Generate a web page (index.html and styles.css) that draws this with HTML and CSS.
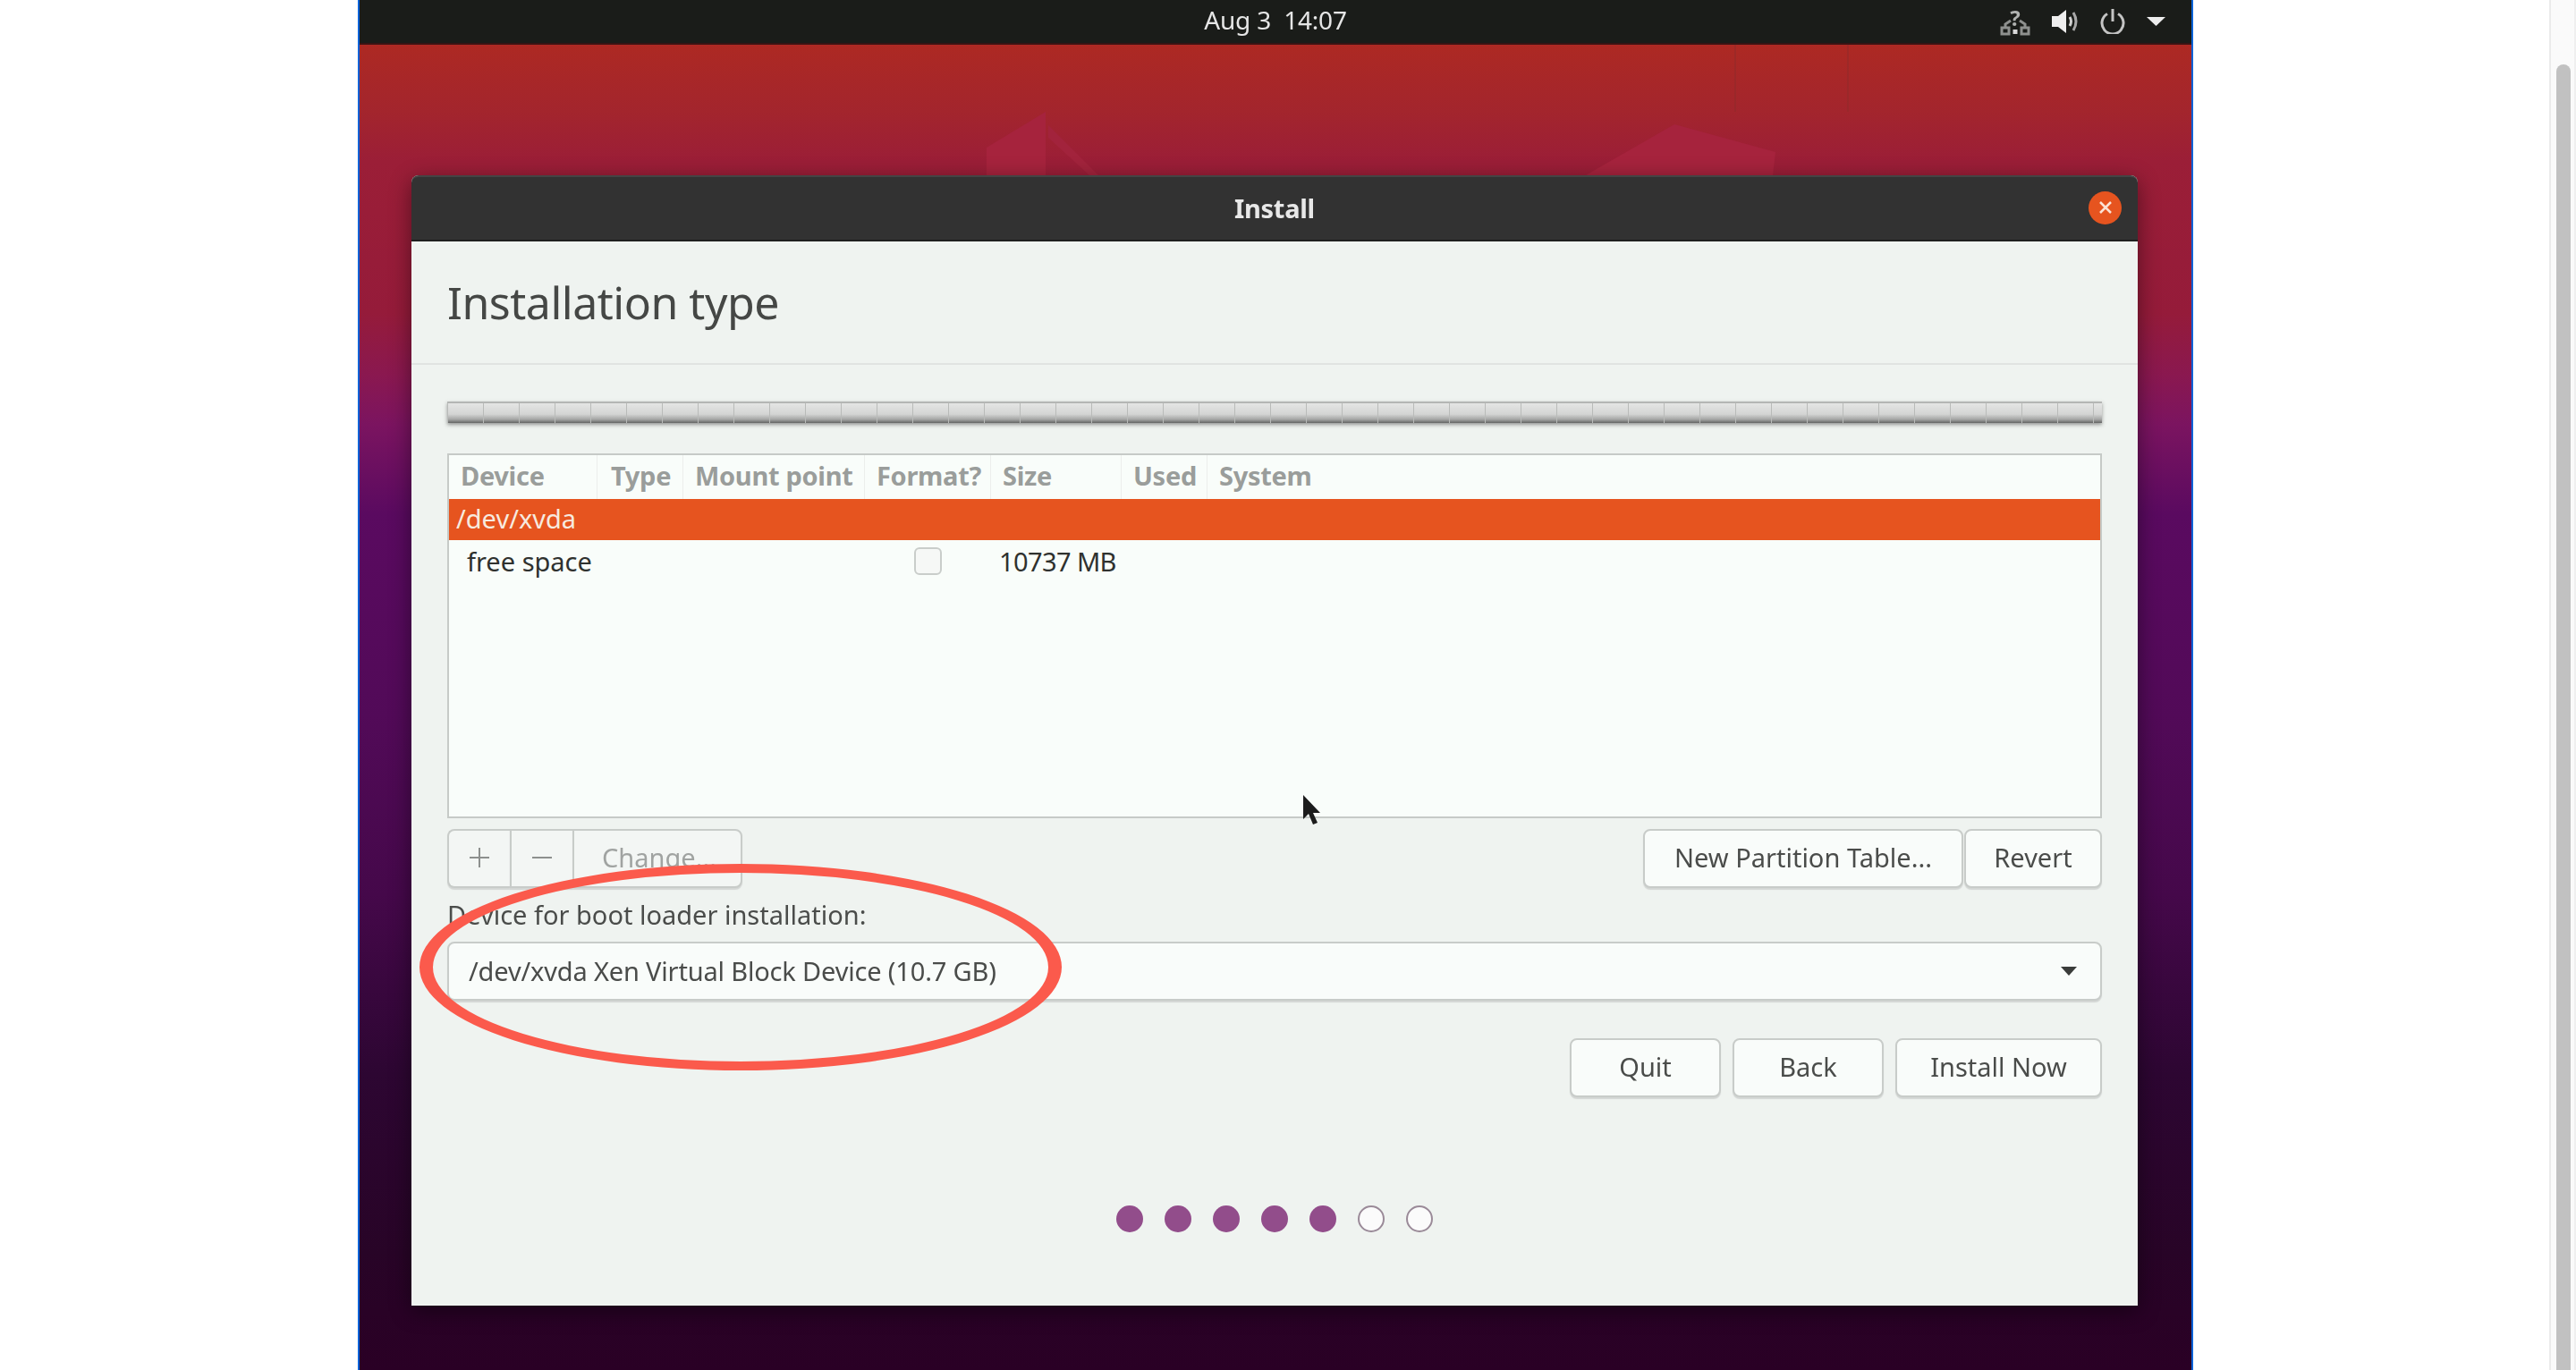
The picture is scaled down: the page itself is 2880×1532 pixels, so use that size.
FILE: index.html
```html
<!DOCTYPE html>
<html lang="en">
<head>
    <meta charset="UTF-8">
    <title>Install</title>
    <link rel="stylesheet" href="styles.css">
</head>
<body>
    <div class="gutter"></div>

    <div class="screen">
        <div class="topbar">
            <div></div>
            <div class="clock">Aug 3  14:07</div>
            <div class="tray">
                <svg class="tray-net" width="34" height="32" viewBox="0 0 34 32">
                    <g fill="none" stroke="#8e908e" stroke-width="3">
                        <rect x="2" y="23" width="8" height="7"/>
                        <rect x="24" y="23" width="8" height="7"/>
                        <path d="M6 23v-4l6-4M28 23v-4l-6-4"/>
                    </g>
                    <rect x="14.500" y="25" width="5" height="5" fill="#d8d8d8"/>
                    <text x="17" y="21" text-anchor="middle" class="tray-q">?</text>
                </svg>
                <svg width="30" height="26" viewBox="0 0 30 26">
                    <path d="M0 7h7l9-7v26l-9-7H0z" fill="#eeeeee"/>
                    <path d="M20 8q3 5 0 10" fill="none" stroke="#d0d0d0" stroke-width="3"/>
                    <path d="M24 3q6 10 0 20" fill="none" stroke="#a8a8a8" stroke-width="3"/>
                </svg>
                <svg width="28" height="28" viewBox="0 0 28 28">
                    <path d="M8 5.500a12 12 0 1 0 12 0" fill="none" stroke="#c4c4c4" stroke-width="3"/>
                    <path d="M14 0v14" stroke="#c4c4c4" stroke-width="3"/>
                </svg>
                <svg width="21" height="10" viewBox="0 0 21 10">
                    <path d="M0 0h21L10.500 10z" fill="#ededed"/>
                </svg>
            </div>
        </div>

        <div class="desktop">
            <svg class="wallpaper" width="2048" height="146" viewBox="0 0 2048 146">
                <path d="M767 75V146H701V115z" fill="#a6233d"/>
                <path d="M770 90L826 146H816L770 104z" fill="#a2233c"/>
                <path d="M1470 89L1583 120L1580 146H1371z" fill="#a6233d"/>
                <path d="M1538 0V75M1664 0V75" stroke="#8f2a2a" stroke-width="1"/>
            </svg>

            <div class="window">
                <div class="titlebar">
                    <div></div>
                    <div class="title">Install</div>
                    <div class="close">
                        <svg width="14" height="14" viewBox="0 0 14 14">
                            <path d="M1 1l12 12M13 1L1 13" stroke="#fbe3d6" stroke-width="2.500"/>
                        </svg>
                    </div>
                </div>

                <div class="page-head">
                    <h1>Installation type</h1>
                </div>

                <div class="content">
                    <div class="part-bar"></div>

                    <div class="table">
                        <div class="cols table-head">
                            <div>Device</div>
                            <div class="type-col">Type</div>
                            <div>Mount point</div>
                            <div>Format?</div>
                            <div>Size</div>
                            <div>Used</div>
                            <div class="last-col">System</div>
                        </div>
                        <div class="row-selected">/dev/xvda</div>
                        <div class="cols row-free">
                            <div class="free-name">free space</div>
                            <div></div>
                            <div></div>
                            <div class="check-cell"><span class="checkbox"></span></div>
                            <div class="free-size">10737 MB</div>
                        </div>
                    </div>

                    <div class="toolbar">
                        <div class="linked">
                            <button class="btn-off btn-icon">
                                <svg width="22" height="22" viewBox="0 0 22 22"><path d="M11 0v22M0 11h22" stroke="#8d908e" stroke-width="2"/></svg>
                            </button>
                            <button class="btn-off btn-icon">
                                <svg width="22" height="22" viewBox="0 0 22 22"><path d="M0 11h22" stroke="#8d908e" stroke-width="2"/></svg>
                            </button>
                            <button class="btn-off btn-change">Change...</button>
                        </div>
                        <div class="toolbar-right">
                            <button class="btn-table">New Partition Table...</button>
                            <button class="btn-revert">Revert</button>
                        </div>
                    </div>

                    <div class="boot-label">Device for boot loader installation:</div>
                    <div class="combo">
                        <span class="combo-text">/dev/xvda Xen Virtual Block Device (10.7 GB)</span>
                        <span class="combo-arrow"></span>
                    </div>

                    <div class="actions">
                        <button class="btn-action">Quit</button>
                        <button class="btn-action">Back</button>
                        <button class="btn-install">Install Now</button>
                    </div>

                    <div class="dots">
                        <span class="dot dot-on"></span>
                        <span class="dot dot-on"></span>
                        <span class="dot dot-on"></span>
                        <span class="dot dot-on"></span>
                        <span class="dot dot-on"></span>
                        <span class="dot"></span>
                        <span class="dot"></span>
                    </div>
                </div>

                <svg class="circle-mark" width="718" height="231" viewBox="0 0 718 231">
                    <path fill="#fb5a4c" fill-rule="evenodd" d="M0 115.500a359 115.500 0 1 0 718 0a359 115.500 0 1 0-718 0zM15 115.500a344 105.500 0 1 1 688 0a344 105.500 0 1 1-688 0z"/>
                </svg>
            </div>

            <svg class="cursor" width="21" height="35" viewBox="0 0 21 35">
                <path d="M1 1v27l6-6 5 12 5-2-5-11h8z" fill="#1c1c1c"/>
            </svg>
        </div>
    </div>

    <div class="blank"></div>

    <div class="scrollbar">
        <div class="thumb"></div>
    </div>
</body>
</html>
```

FILE: styles.css
```css
* {
    box-sizing: border-box;
}
body {
    margin: 0;
    height: 1532px;
    overflow: hidden;
    display: flex;
    background-color: #fff;
    font-family: "Noto Sans", sans-serif;
    font-size: 29px;
    color: #4a4c4a;
}
.gutter {
    width: 400px;
}
.blank {
    flex: 1;
}
.screen {
    width: 2052px;
    border-left: 2px solid #0a63d8;
    border-right: 2px solid #0a63d8;
    display: flex;
    flex-direction: column;
}

/* top panel */
.topbar {
    height: 50px;
    display: grid;
    grid-template-columns: 1fr auto 1fr;
    align-items: center;
    background-color: #1a1c19;
    border-bottom: 2px solid #3a1414;
    filter: blur(0.5px);
}
.clock {
    font-size: 28px;
    letter-spacing: -0.2px;
    white-space: pre;
    color: #e6e6e6;
    padding-bottom: 4px;
}
.tray {
    justify-self: end;
    margin-right: 29px;
    display: flex;
    align-items: center;
    gap: 24px;
}
.tray-net {
    overflow: visible;
}
.tray-q {
    font-size: 24px;
    font-weight: 700;
    fill: #b0b2b0;
}

/* wallpaper */
.desktop {
    flex: 1;
    position: relative;
    padding: 146px 0 0 58px;
    overflow: hidden;
    background: linear-gradient(180deg,
        #ad2923 0,
        #a3252d 75px,
        #9b1e37 130px,
        #951b3a 300px,
        #8a1850 370px,
        #7b1460 425px,
        #5a0a60 525px,
        #520a58 750px,
        #45084a 950px,
        #2d0632 1150px,
        #280427 1350px,
        #2a0025 1482px);
}
.wallpaper {
    position: absolute;
    top: 0;
    left: 0;
}
.cursor {
    position: absolute;
    left: 1054px;
    top: 838px;
}

/* installer window */
.window {
    position: relative;
    width: 1930px;
    height: 1264px;
    border-radius: 8px 8px 0 0;
    background-color: #eff3f0;
    box-shadow: 0 6px 24px rgba(0, 0, 0, 0.45);
}
.titlebar {
    height: 74px;
    display: grid;
    grid-template-columns: 1fr auto 1fr;
    align-items: center;
    background-color: #323232;
    border-radius: 8px 8px 0 0;
    border-top: 2px solid #444;
    border-bottom: 2px solid #1f1f1f;
    filter: blur(0.5px);
}
.title {
    font-size: 29px;
    font-weight: 700;
    color: #e8e8e8;
    letter-spacing: -0.3px;
    padding-bottom: 2px;
}
.close {
    justify-self: end;
    width: 37px;
    height: 37px;
    margin: 0 18px 2px 0;
    border-radius: 50%;
    background-color: #e6541f;
    display: flex;
    align-items: center;
    justify-content: center;
}
.page-head {
    height: 138px;
    padding: 0 40px;
    display: flex;
    align-items: center;
    border-bottom: 2px solid #e0e3e1;
    filter: blur(0.5px);
}
h1 {
    margin: 0;
    font-size: 50px;
    font-weight: 400;
    letter-spacing: -0.5px;
    color: #454745;
}
.content {
    padding: 41px 40px 0 40px;
    filter: blur(0.5px);
}

/* partition bar */
.part-bar {
    height: 24px;
    margin-bottom: 34px;
    border-top: 2px solid #b4b6b4;
    background:
        repeating-linear-gradient(90deg, #b9bbb9 0, #b9bbb9 1px, transparent 1px, transparent 40px),
        linear-gradient(180deg, #e4e5e4 0, #d4d5d4 55%, #a4a5a4 82%, #646564 100%);
    box-shadow: 0 2px 4px rgba(60, 60, 60, 0.5);
}

/* partition table */
.table {
    height: 408px;
    border: 2px solid #c6cac7;
    background-color: #f9fdfa;
}
.cols {
    display: grid;
    grid-template-columns: 166px 96px 203px 141px 146px 96px 1fr;
}
.table-head {
    height: 49px;
    font-weight: 700;
    letter-spacing: -0.3px;
    color: #9a9d9b;
}
.table-head > div {
    padding-left: 13px;
    line-height: 46px;
    border-right: 1px solid #eceeec;
}
.table-head .type-col {
    padding-left: 15px;
}
.table-head .last-col {
    border-right: none;
}
.row-selected {
    height: 46px;
    padding-left: 8px;
    line-height: 44px;
    background-color: #e6541f;
    color: #f7eadf;
}
.row-free {
    height: 48px;
    padding-bottom: 2px;
    align-items: center;
    color: #2f312f;
}
.free-name {
    padding-left: 20px;
    white-space: nowrap;
}
.check-cell {
    display: flex;
    justify-content: center;
}
.checkbox {
    width: 31px;
    height: 31px;
    border: 2px solid #c9cdca;
    border-radius: 6px;
    background-color: #f6f8f6;
}
.free-size {
    padding-left: 9px;
    letter-spacing: -0.6px;
    white-space: nowrap;
}

/* buttons */
button {
    height: 66px;
    padding: 0 0 3px;
    font: inherit;
    color: #4a4c4a;
    background-color: #f9fcfa;
    border: 2px solid #c8ccc9;
    border-radius: 8px;
    box-shadow: 0 2px 1px #d3d6d4;
}
.toolbar {
    margin-top: 12px;
    display: flex;
    justify-content: space-between;
}
.toolbar-right {
    display: flex;
    gap: 1px;
}
.linked {
    display: flex;
}
.linked button {
    border-radius: 0;
    border-right: none;
    background-color: #f3f6f4;
}
.linked button:first-child {
    border-radius: 8px 0 0 8px;
}
.linked button:last-child {
    border-radius: 0 8px 8px 0;
    border-right: 2px solid #c8ccc9;
}
.btn-off {
    color: #a0a3a1;
}
.btn-icon {
    width: 70px;
    display: flex;
    align-items: center;
    justify-content: center;
}
.btn-change {
    width: 190px;
    padding-left: 4px;
}
.btn-table {
    width: 358px;
}
.btn-revert {
    width: 154px;
}
.boot-label {
    height: 36px;
    margin: 13px 0 11px;
    line-height: 34px;
}
.combo {
    height: 66px;
    padding: 0 26px 2px 22px;
    display: flex;
    align-items: center;
    justify-content: space-between;
    background-color: #f9fcfa;
    border: 2px solid #c8ccc9;
    border-radius: 8px;
    box-shadow: 0 2px 1px #d3d6d4;
}
.combo-text {
    letter-spacing: -0.17px;
}
.combo-arrow {
    width: 0;
    height: 0;
    margin-top: 2px;
    border-left: 9px solid transparent;
    border-right: 9px solid transparent;
    border-top: 10px solid #3a3c3a;
}
.actions {
    margin-top: 42px;
    display: flex;
    justify-content: flex-end;
    gap: 13px;
}
.btn-action {
    width: 169px;
}
.btn-install {
    width: 231px;
}

/* progress dots */
.dots {
    margin-top: 121px;
    display: flex;
    justify-content: center;
    gap: 24px;
}
.dot {
    width: 30px;
    height: 30px;
    border: 2px solid #9a8a98;
    border-radius: 50%;
    background-color: #fbfbfb;
}
.dot-on {
    border: none;
    background-color: #924d8b;
}

/* red mark drawn on the screenshot */
.circle-mark {
    position: absolute;
    left: 9px;
    top: 770px;
}

/* browser scrollbar */
.scrollbar {
    width: 30px;
    padding: 72px 0 0 6px;
    display: flex;
    background-color: #fafafa;
    border-left: 2px solid #ebebeb;
    border-right: 2px solid #efefef;
}
.thumb {
    width: 16px;
    border-radius: 8px 8px 0 0;
    background-color: #c1c1c1;
}
```
